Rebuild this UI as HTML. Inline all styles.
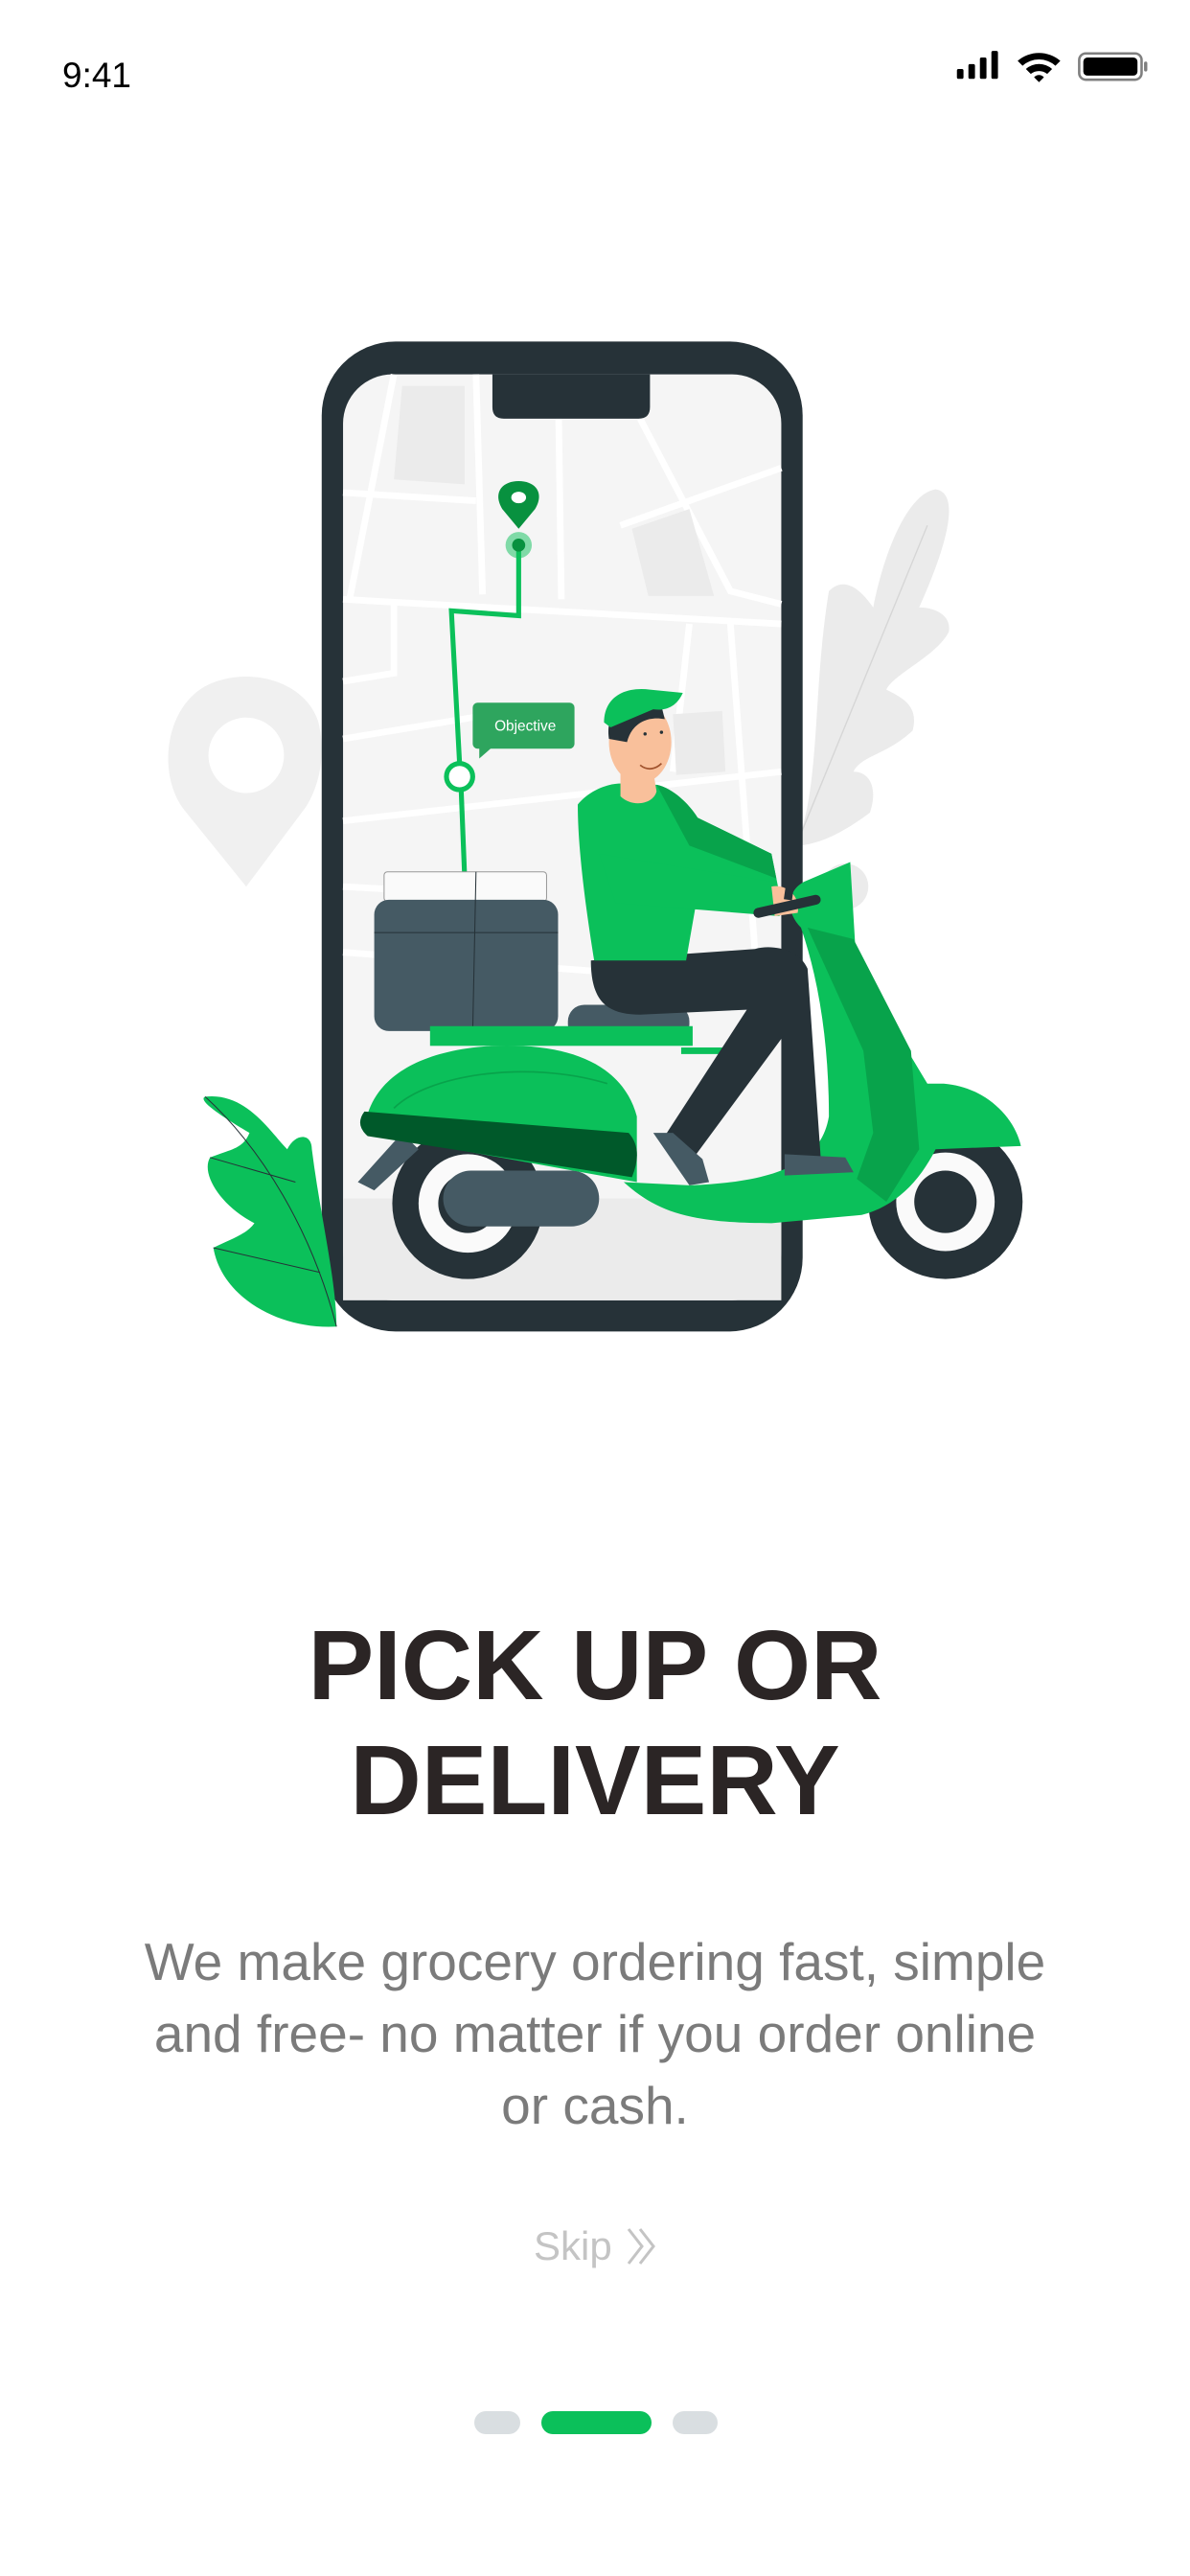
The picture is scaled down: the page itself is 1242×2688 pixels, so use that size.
<!DOCTYPE html>
<html><head><meta charset="utf-8"><style>
html,body{margin:0;padding:0;background:#fff;}
body{width:1242px;height:2688px;position:relative;overflow:hidden;font-family:"Liberation Sans",sans-serif;}
.abs{position:absolute;}
.t{left:0;width:1242px;text-align:center;color:#2b2525;font-weight:bold;font-size:103px;line-height:120px;}
.b{left:0;width:1242px;text-align:center;color:#7b7b7b;font-size:55px;line-height:75px;}
</style></head><body>
<div class="abs" style="left:65px;top:59px;font-size:37px;line-height:40px;color:#000;">9:41</div>

<svg class="abs" style="left:0;top:0" width="1242" height="2688" viewBox="0 0 725 1569">
<rect x="583" y="42" width="4" height="6" rx="1" fill="#000"/>
<rect x="590" y="39" width="4" height="9" rx="1" fill="#000"/>
<rect x="597" y="35" width="4" height="13" rx="1" fill="#000"/>
<rect x="604" y="31" width="4" height="17" rx="1" fill="#000"/>
<path d="M620,37 A20,20 0 0 1 646,37 L643,40 A15,15 0 0 0 623,40Z M625,42 A12,12 0 0 1 641,42 L638,45 A8,8 0 0 0 628,45Z M630,47 L633,50 L636,47 A4,4 0 0 0 630,47Z" fill="#000"/>
<rect x="657.5" y="32.5" width="38" height="16" rx="4" fill="none" stroke="#000" stroke-width="1.5" opacity="0.5"/>
<rect x="660" y="35" width="33" height="11" rx="2.5" fill="#000"/>
<rect x="697" y="37.5" width="2" height="6" rx="1" fill="#000" opacity="0.5"/>

<path d="M150,540 L112,493 C96,472 100,432 125,418 C150,405 186,414 194,440 C199,460 194,480 186,492 Z" fill="#f0f0f0"/>
<circle cx="150" cy="460" r="23" fill="#fff"/>
<path d="M485,515 C500,480 495,420 505,360 C515,350 525,360 532,370 C540,330 555,300 570,298 C585,300 578,330 560,370 C570,370 580,375 578,385 C570,400 545,410 540,420 C550,425 560,430 556,445 C540,460 525,460 520,470 C530,470 535,480 530,495 C510,510 495,515 485,515Z" fill="#ebebeb"/>
<path d="M485,515 L565,320" stroke="#d6d6d6" stroke-width="0.8" fill="none"/>
<circle cx="515" cy="540" r="14" fill="#ebebeb"/>

<rect x="196" y="208" width="293" height="603" rx="45" fill="#263238"/>
<rect x="209" y="228" width="267" height="564" rx="30" fill="#f5f5f5"/>
<g stroke="#fff" stroke-width="4" fill="none">
<path d="M209,365 L476,380"/><path d="M240,228 L213,365"/><path d="M209,300 L290,305"/>
<path d="M290,228 L294,362"/><path d="M390,255 L445,360 L476,368"/><path d="M378,320 L476,285"/>
<path d="M209,450 L300,435"/><path d="M209,500 L476,470"/><path d="M240,365 L240,410 L209,415"/>
<path d="M420,380 L410,470"/><path d="M445,380 L460,580"/><path d="M209,580 L476,600"/>
<path d="M340,230 L342,365"/><path d="M209,540 L300,545"/>
</g>
<path d="M245,235 L283,235 L283,295 L240,292Z" fill="#ebebeb"/>
<path d="M385,322 L420,310 L435,363 L395,363Z" fill="#ebebeb"/>
<path d="M410,435 L440,433 L442,470 L412,472Z" fill="#ebebeb"/>
<rect x="209" y="730" width="267" height="62" fill="#ebebeb"/>
<path d="M300,228 L396,228 L396,248 Q396,255 389,255 L307,255 Q300,255 300,248Z" fill="#263238"/>

<path d="M316,333 L316,375 L275,372 L280,465" stroke="#0bc05a" stroke-width="3" fill="none"/>
<path d="M281,482 L283,532" stroke="#0bc05a" stroke-width="3" fill="none"/>
<circle cx="316" cy="332" r="8" fill="#0bc05a" opacity="0.5"/><circle cx="316" cy="332" r="4" fill="#08913f"/>
<path d="M316,322 L306,310 C300,300 306,293 316,293 C326,293 332,300 326,310Z" fill="#08913f"/>
<ellipse cx="316" cy="303" rx="4.5" ry="3.5" fill="#fff"/>
<circle cx="280" cy="473" r="8" fill="#fff" stroke="#0bc05a" stroke-width="3"/>
<rect x="288" y="428" width="62" height="28" rx="3" fill="#2ea55e"/>
<path d="M292,455 L292,462 L300,455Z" fill="#2ea55e"/>
<text x="320" y="445" font-family="Liberation Sans,sans-serif" font-size="9" fill="#fff" text-anchor="middle">Objective</text>

<path d="M205,808 C170,810 135,790 130,760 C140,755 150,752 155,745 C135,735 122,715 128,705 C140,700 148,700 152,690 C135,680 120,670 125,668 C150,665 165,690 175,700 C180,690 190,690 190,700 C195,740 205,780 205,808Z" fill="#0bc05a"/>
<path d="M125,668 C160,700 190,750 205,808 M130,760 L195,775 M128,705 L180,720" stroke="#263238" stroke-width="0.6" fill="none"/>

<rect x="234" y="531" width="99" height="18" rx="2" fill="#fafafa" stroke="#999" stroke-width="0.6"/>
<rect x="228" y="548" width="112" height="80" rx="9" fill="#455a64"/>
<path d="M290,531 L288,628 M228,568 L340,568" stroke="#263238" stroke-width="0.6"/>

<circle cx="285" cy="733" r="46" fill="#263238"/>
<circle cx="285" cy="733" r="30" fill="#fafafa"/>
<circle cx="285" cy="733" r="18" fill="#263238"/>
<path d="M218,720 L245,690 L255,700 L228,725Z" fill="#455a64"/>
<rect x="270" y="713" width="95" height="34" rx="17" fill="#455a64"/>
<circle cx="576" cy="732" r="47" fill="#263238"/>
<circle cx="576" cy="732" r="30" fill="#fafafa"/>
<circle cx="576" cy="732" r="19" fill="#263238"/>

<rect x="346" y="612" width="74" height="22" rx="10" fill="#455a64"/>
<rect x="262" y="625" width="160" height="12" fill="#0bc05a"/>
<path d="M222,688 C225,660 250,640 300,637 C350,635 380,650 388,680 L388,720 L222,690Z" fill="#0bc05a"/>
<path d="M240,675 C260,655 320,645 370,660" stroke="#08a34b" stroke-width="1" fill="none"/>
<path d="M380,720 C400,738 420,745 470,745 L525,740 C545,735 560,720 570,700 L622,698 C618,680 600,662 575,660 L565,660 C550,635 535,610 522,592 L518,525 L490,537 C480,542 478,555 488,565 C500,600 505,640 505,680 C500,710 470,720 420,722 Z" fill="#0bc05a"/>
<path d="M492,565 L520,572 L555,640 L560,700 L540,732 L522,718 L532,690 L526,640Z" fill="#08a34b"/>
<path d="M222,677 L383,690 Q392,700 385,717 L224,692 Q216,685 222,677Z" fill="#00592a"/>
<rect x="415" y="638" width="30" height="4" fill="#0bc05a"/>

<path d="M360,585 C360,610 370,618 390,618 L455,615 L405,692 L422,706 L478,630 L482,705 L500,705 L492,590 C487,578 470,575 460,578 Z" fill="#263238"/>
<path d="M398,690 L420,722 L432,720 L428,706 L410,690Z" fill="#455a64"/>
<path d="M478,703 L478,716 L520,714 L515,705Z" fill="#455a64"/>
<path d="M352,490 C360,480 375,475 385,478 L400,478 C410,480 420,490 425,498 L470,520 L475,545 L425,545 L418,585 L362,585 C358,560 352,520 352,490Z" fill="#0bc05a"/>
<path d="M365,520 L470,537 L475,558 L375,550Z" fill="#0bc05a"/>
<path d="M400,478 C410,480 420,490 425,498 L470,520 L473,535 L420,515Z" fill="#08a34b"/>
<path d="M470,540 C478,538 488,545 486,556 L472,558Z" fill="#f9c09b"/>
<path d="M462,556 L497,548" stroke="#263238" stroke-width="6" stroke-linecap="round"/>
<path d="M484,520 L480,548" stroke="#263238" stroke-width="5"/>
<path d="M378,470 L378,485 C385,492 398,490 400,482 L398,470Z" fill="#f9c09b"/>
<ellipse cx="390" cy="452" rx="19" ry="25" fill="#f9c09b"/>
<path d="M371,450 C368,430 385,425 403,430 L405,438 C395,436 385,440 382,452 Z" fill="#263238"/>
<path d="M368,440 C368,425 380,418 396,420 L416,422 C412,431 405,433 398,432 L372,443Z" fill="#0bc05a"/>
<path d="M390,466 C395,470 400,468 403,465" stroke="#a0522d" stroke-width="1" fill="none"/>
<circle cx="393" cy="447" r="1" fill="#263238"/><circle cx="403" cy="446" r="1" fill="#263238"/>
</svg>

<div class="abs t" style="top:1678px;">PICK UP OR</div>
<div class="abs t" style="top:1798px;">DELIVERY</div>
<div class="abs b" style="top:2010px;">We make grocery ordering fast, simple<br>and free- no matter if you order online<br>or cash.</div>
<div class="abs" style="left:557px;top:2319px;font-size:42px;line-height:50px;color:#c4c4c4;">Skip</div>
<svg class="abs" style="left:652px;top:2324px" width="36" height="40" viewBox="0 0 36 40">
<path d="M4,2 L18,20 L4,38 M16,2 L30,20 L16,38" stroke="#c4c4c4" stroke-width="3" fill="none"/>
</svg>
<div class="abs" style="left:495px;top:2516px;width:48px;height:24px;border-radius:12px;background:#d9dee1;"></div>
<div class="abs" style="left:565px;top:2516px;width:115px;height:24px;border-radius:12px;background:#0bc05a;"></div>
<div class="abs" style="left:702px;top:2516px;width:47px;height:24px;border-radius:12px;background:#d9dee1;"></div>
</body></html>
